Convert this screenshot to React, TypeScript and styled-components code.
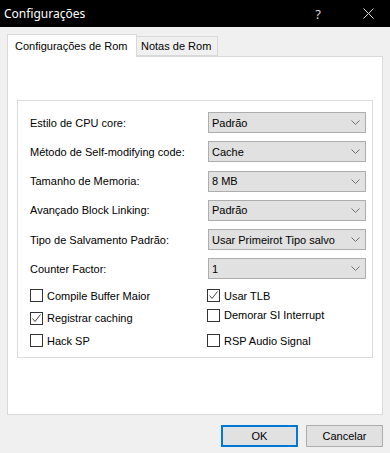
import React, { FC, ReactElement } from 'react';
import styled, { createGlobalStyle } from 'styled-components';

const GlobalStyle = createGlobalStyle`
    html, body {
        margin: 0;
        padding: 0;
        background: #f0f0f0;
    }
    body {
        font-family: "Liberation Sans", Arial, sans-serif;
        font-size: 11px;
        color: #000;
    }
`;

type ComboRow = { label: string; value: string };

const combos: ComboRow[] = [
    { label: 'Estilo de CPU core:', value: 'Padrão' },
    { label: 'Método de Self-modifying code:', value: 'Cache' },
    { label: 'Tamanho de Memoria:', value: '8 MB' },
    { label: 'Avançado Block Linking:', value: 'Padrão' },
    { label: 'Tipo de Salvamento Padrão:', value: 'Usar Primeirot Tipo salvo' },
    { label: 'Counter Factor:', value: '1' },
];

type CheckItem = { label: string; checked: boolean };

const checks: CheckItem[] = [
    { label: 'Compile Buffer Maior', checked: false },
    { label: 'Usar TLB', checked: true },
    { label: 'Registrar caching', checked: true },
    { label: 'Demorar SI Interrupt', checked: false },
    { label: 'Hack SP', checked: false },
    { label: 'RSP Audio Signal', checked: false },
];

const Chevron: FC = (): ReactElement => (
    <svg width="9" height="5" viewBox="0 0 9 5">
        <polyline points="0.5,0.5 4.5,4.5 8.5,0.5" fill="none" stroke="#707070" strokeWidth="1" />
    </svg>
);

const CheckBox: FC<{ checked: boolean }> = ( { checked } ): ReactElement => (
    <Box>
        {checked && (
            <svg width="11" height="11" viewBox="0 0 11 11">
                <polyline points="1.5,5.5 4,8.5 9.5,1.5" fill="none" stroke="#444" strokeWidth="1" />
            </svg>
        )}
    </Box>
);

const App: FC = (): ReactElement => {
    return (
        <Window>
            <GlobalStyle />
            <TitleBar>
                <Title>Configurações</Title>
                <TitleButtons>
                    <Help>?</Help>
                    <svg width="11" height="11" viewBox="0 0 11 11">
                        <line x1="0.5" y1="0.5" x2="10.5" y2="10.5" stroke="#d8d8d8" strokeWidth="1" />
                        <line x1="10.5" y1="0.5" x2="0.5" y2="10.5" stroke="#d8d8d8" strokeWidth="1" />
                    </svg>
                </TitleButtons>
            </TitleBar>

            <Body>
                <TabStrip>
                    <Tab active>Configurações de Rom</Tab>
                    <Tab>Notas de Rom</Tab>
                </TabStrip>
                <Panel>
                    <GroupBox>
                        <ComboGrid>
                            {combos.map( ( item: ComboRow ) => (
                                <React.Fragment key={item.label}>
                                    <Label>{item.label}</Label>
                                    <Combo>
                                        <span>{item.value}</span>
                                        <Chevron />
                                    </Combo>
                                </React.Fragment>
                            ) )}
                        </ComboGrid>
                        <CheckGrid>
                            {checks.map( ( item: CheckItem, i: number ) => (
                                <CheckRow key={item.label} shift={i === 3 ? -3 : 0}>
                                    <CheckBox checked={item.checked} />
                                    <span>{item.label}</span>
                                </CheckRow>
                            ) )}
                        </CheckGrid>
                    </GroupBox>
                </Panel>
                <Footer>
                    <Button primary>OK</Button>
                    <Button>Cancelar</Button>
                </Footer>
            </Body>
        </Window>
    );
};

const Window = styled.div`
    width: 390px;
    height: 453px;
    background: #f0f0f0;
    display: flex;
    flex-direction: column;
    overflow: hidden;
`;

const TitleBar = styled.div`
    height: 27px;
    background: #000;
    display: flex;
    align-items: center;
    justify-content: space-between;
    padding: 0 16px 0 4px;
`;

const Title = styled.div`
    color: #fff;
    font-family: "Noto Sans", "Open Sans", sans-serif;
    font-size: 12px;
`;

const TitleButtons = styled.div`
    display: flex;
    align-items: center;
    gap: 42px;
`;

const Help = styled.span`
    color: #d8d8d8;
    font-family: "Noto Sans", sans-serif;
    font-size: 13px;
`;

const Body = styled.div`
    flex: 1;
    display: flex;
    flex-direction: column;
    padding: 7px 7px 0 7px;
`;

const TabStrip = styled.div`
    display: flex;
    align-items: flex-end;
    height: 22px;
    position: relative;
    z-index: 1;
`;

const Tab = styled.div<{ active?: boolean }>`
    box-sizing: border-box;
    height: ${( p ) => ( p.active ? '23px' : '20px' )};
    margin-bottom: ${( p ) => ( p.active ? '-1px' : '0' )};
    padding: 0 ${( p ) => ( p.active ? '7px' : '4px' )};
    display: flex;
    align-items: center;
    background: ${( p ) => ( p.active ? '#fff' : '#f0f0f0' )};
    border: 1px solid #d9d9d9;
    border-bottom: ${( p ) => ( p.active ? 'none' : '1px solid #d9d9d9' )};
    border-left: ${( p ) => ( p.active ? '1px solid #d9d9d9' : 'none' )};
    width: ${( p ) => ( p.active ? '130px' : '81px' )};
`;

const Panel = styled.div`
    box-sizing: border-box;
    width: 376px;
    height: 359px;
    background: #fff;
    border: 1px solid #d9d9d9;
    padding: 43px 9px 0 9px;
`;

const GroupBox = styled.div`
    box-sizing: border-box;
    height: 258px;
    border: 1px solid #dcdcdc;
    padding: 11px 6px 0 12px;
`;

const ComboGrid = styled.div`
    display: grid;
    grid-template-columns: 178px 158px;
    grid-auto-rows: 21px;
    row-gap: 8.3px;
    align-items: center;
`;

const Label = styled.div`
    white-space: nowrap;
`;

const Combo = styled.div`
    box-sizing: border-box;
    height: 21px;
    background: #e1e1e1;
    border: 1px solid #adadad;
    display: flex;
    align-items: center;
    justify-content: space-between;
    padding: 0 5px 0 3px;
`;

const CheckGrid = styled.div`
    margin-top: 5px;
    display: grid;
    grid-template-columns: 177px 1fr;
    grid-auto-rows: 22.5px;
    align-items: center;
`;

const CheckRow = styled.div<{ shift: number }>`
    display: flex;
    align-items: center;
    gap: 4px;
    position: relative;
    top: ${( p ) => p.shift}px;
`;

const Box = styled.div`
    box-sizing: border-box;
    width: 13px;
    height: 13px;
    border: 1px solid #333;
    background: #fff;
    display: flex;
    align-items: center;
    justify-content: center;
`;

const Footer = styled.div`
    display: flex;
    justify-content: flex-end;
    gap: 8px;
    padding: 10px 0 0 0;
`;

const Button = styled.div<{ primary?: boolean }>`
    box-sizing: border-box;
    width: 77px;
    height: 22px;
    display: flex;
    align-items: center;
    justify-content: center;
    background: #e1e1e1;
    border: ${( p ) => ( p.primary ? '2px solid #0078d7' : '1px solid #adadad' )};
`;

export default App;
